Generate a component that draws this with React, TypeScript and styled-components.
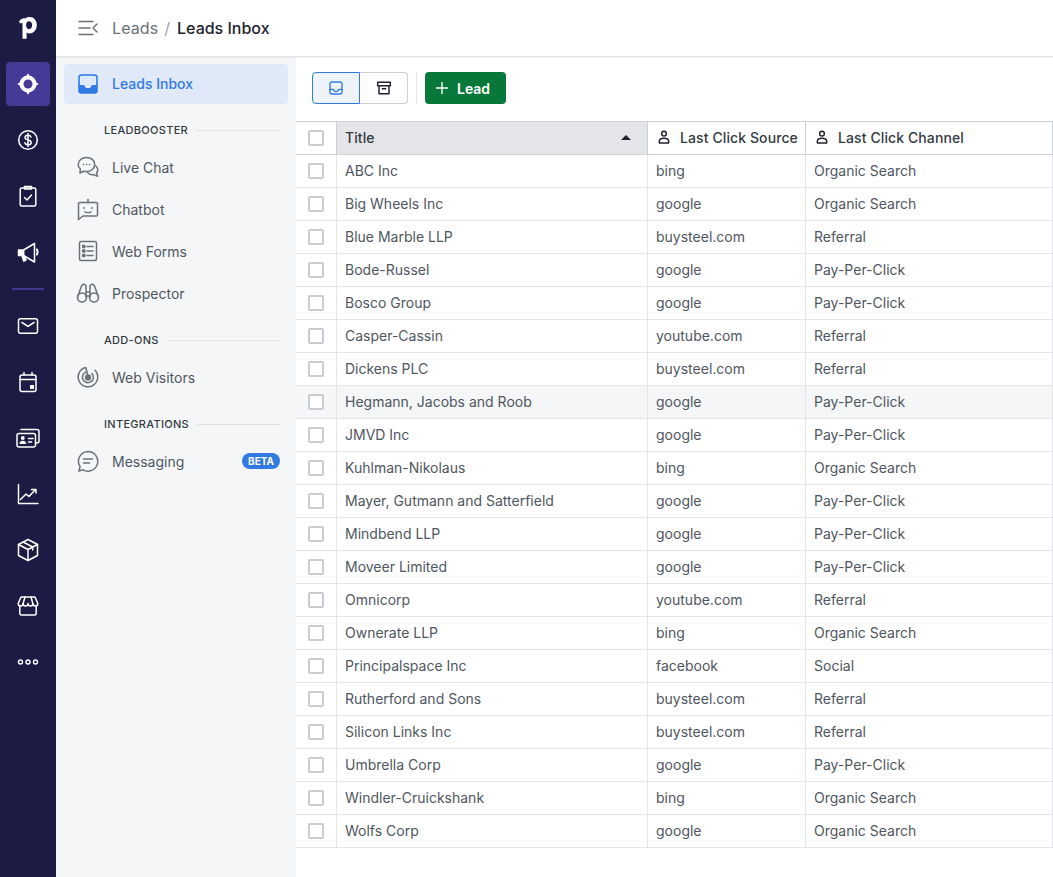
import React from "react";
import styled, { createGlobalStyle } from "styled-components";

const GlobalStyle = createGlobalStyle`
  html, body {
    margin: 0;
    padding: 0;
    background: #fff;
    font-family: Inter, "Liberation Sans", sans-serif;
    color: #21232c;
  }
  * { box-sizing: border-box; }
`;

const Shell = styled.div`
  display: flex;
  width: 1053px;
  height: 877px;
  overflow: hidden;
`;

const Rail = styled.nav`
  width: 56px;
  flex: none;
  background: #1b1b44;
  display: flex;
  flex-direction: column;
  align-items: center;
`;

const RailLogo = styled.div`
  height: 56px;
  display: flex;
  align-items: center;
  justify-content: center;
  color: #fff;
`;

const RailButton = styled.div<{ $active?: boolean }>`
  width: 44px;
  height: 44px;
  margin: 6px 0;
  border-radius: 4px;
  display: flex;
  align-items: center;
  justify-content: center;
  color: #fff;
  background: ${(p) => (p.$active ? "#453b97" : "transparent")};
`;

const RailDivider = styled.div`
  width: 32px;
  height: 2px;
  background: #3f3a8f;
  margin: 8px 0;
  flex: none;
`;

const Main = styled.div`
  flex: 1;
  min-width: 0;
  display: flex;
  flex-direction: column;
`;

const Header = styled.header`
  height: 57px;
  flex: none;
  display: flex;
  align-items: center;
  padding-left: 20px;
  background: #fff;
  border-bottom: 1px solid #e3e5e8;
  box-shadow: 0 1px 2px rgba(33, 35, 44, 0.06);
  position: relative;
  font-size: 16px;
  line-height: 24px;
`;

const MenuToggle = styled.span`
  display: flex;
  color: #6a7178;
  margin-right: 12px;
`;

const Crumb = styled.span`
  color: #6a7178;
  letter-spacing: 0.1px;
`;

const CrumbSep = styled.span`
  color: #9aa0a6;
  margin: 0 7px 0 6px;
`;

const CrumbCurrent = styled.span`
  font-weight: 500;
  color: #21232c;
`;

const Body = styled.div`
  flex: 1;
  display: flex;
  min-height: 0;
`;

const Side = styled.aside`
  width: 240px;
  flex: none;
  background: #f5f6f8;
  padding: 7px 8px 0;
  display: flex;
  flex-direction: column;
`;

const SideItem = styled.div<{ $active?: boolean }>`
  height: ${(p) => (p.$active ? "40px" : "42px")};
  display: flex;
  align-items: center;
  padding: 0 8px 0 12px;
  border-radius: 4px;
  font-size: 14px;
  color: ${(p) => (p.$active ? "#317ae2" : "#4f5660")};
  font-weight: ${(p) => (p.$active ? 500 : 400)};
  background: ${(p) => (p.$active ? "#dfe9f8" : "transparent")};
  svg {
    margin-right: 12px;
    flex: none;
    color: ${(p) => (p.$active ? "#317ae2" : "#6a7178")};
  }
`;

const ActiveLabel = styled.span`
  padding-bottom: 2px;
`;

const SectionTitle = styled.div`
  height: 16px;
  margin: 18px 0 8px;
  padding: 0 8px 0 40px;
  display: flex;
  align-items: center;
  gap: 8px;
  font-size: 11px;
  font-weight: 500;
  letter-spacing: 0.3px;
  color: #343a42;
  white-space: nowrap;
  &::after {
    content: "";
    flex: 1;
    height: 1px;
    background: #e0e2e6;
  }
`;

const Beta = styled.span`
  margin-left: auto;
  height: 16px;
  padding: 0 6px;
  border-radius: 8px;
  background: #317ae2;
  color: #fff;
  font-size: 10px;
  font-weight: 700;
  line-height: 16px;
`;

const Content = styled.main`
  flex: 1;
  min-width: 0;
  display: flex;
  flex-direction: column;
`;

const Toolbar = styled.div`
  height: 64px;
  flex: none;
  display: flex;
  align-items: flex-start;
  padding: 15px 0 0 16px;
`;

const Segment = styled.div`
  display: flex;
  height: 32px;
`;

const SegmentButton = styled.button<{ $selected?: boolean; $side: "left" | "right" }>`
  width: 48px;
  height: 32px;
  padding: 0;
  display: flex;
  align-items: center;
  justify-content: center;
  background: ${(p) => (p.$selected ? "#eef4fd" : "#fff")};
  color: ${(p) => (p.$selected ? "#317ae2" : "#21232c")};
  border: 1px solid ${(p) => (p.$selected ? "#317ae2" : "#cdd0d5")};
  border-left-width: ${(p) => (p.$side === "right" ? 0 : "1px")};
  border-radius: ${(p) => (p.$side === "left" ? "4px 0 0 4px" : "0 4px 4px 0")};
`;

const ToolDivider = styled.div`
  width: 1px;
  height: 32px;
  background: #e3e5e8;
  margin: 0 8px;
`;

const AddButton = styled.button`
  width: 81px;
  height: 32px;
  border: 0;
  border-radius: 4px;
  background: #08773a;
  color: #fff;
  font-family: inherit;
  font-size: 14px;
  font-weight: 600;
  display: flex;
  align-items: center;
  padding: 0 0 0 9px;
  gap: 7px;
`;

const Row = styled.div<{ $head?: boolean; $hover?: boolean }>`
  display: grid;
  grid-template-columns: 41px 311px 158px 247px;
  height: ${(p) => (p.$head ? "34px" : "33px")};
  border-top: ${(p) => (p.$head ? "1px solid #cdd0d5" : "0")};
  border-bottom: 1px solid ${(p) => (p.$head ? "#cdd0d5" : "#e3e5e8")};
  background: ${(p) => (p.$hover ? "#f5f6f8" : "#fff")};
`;

const Cell = styled.div<{ $head?: boolean; $sorted?: boolean }>`
  display: flex;
  align-items: center;
  min-width: 0;
  padding: 0 8px 2px;
  font-size: 14px;
  white-space: nowrap;
  letter-spacing: ${(p) => (p.$head ? "0.1px" : "0")};
  color: ${(p) => (p.$head ? "#343a42" : "#4f5660")};
  font-weight: ${(p) => (p.$head ? 500 : 400)};
  background: ${(p) => (p.$sorted ? "#e3e5e8" : "transparent")};
  border-right: 1px solid ${(p) => (p.$head ? "#cdd0d5" : "#e3e5e8")};
`;

const CheckCell = styled(Cell)`
  justify-content: center;
  padding: 0 1px 0 0;
`;

const Check = styled.span`
  width: 16px;
  height: 16px;
  border: 2px solid #c9ccd1;
  border-radius: 2px;
  background: #fff;
`;

const SortArrow = styled.span`
  margin-left: auto;
  margin-right: 8px;
  width: 0;
  height: 0;
  border-left: 5px solid transparent;
  border-right: 5px solid transparent;
  border-bottom: 5px solid #21232c;
`;

const PersonWrap = styled.span`
  display: flex;
  margin-right: 8px;
  color: #21232c;
`;

type IconProps = { size?: number; children: React.ReactNode };

const Icon = ({ size = 24, children }: IconProps) => (
  <svg
    width={size}
    height={size}
    viewBox="0 0 24 24"
    fill="none"
    stroke="currentColor"
    strokeWidth={1.5}
    strokeLinecap="round"
    strokeLinejoin="round"
  >
    {children}
  </svg>
);

const LogoMark = () => (
  <svg width="20" height="24" viewBox="0 0 20 24" fill="currentColor">
    <path
      fillRule="evenodd"
      d="M1 5.200C3.200 2.600 5.200 1.600 7.600 2.400c.5-.6 1.900-1.300 3.800-1.300 4.600 0 7.400 3.400 7.400 8 0 4.800-3 8.300-7.200 8.300-1.300 0-2.200-.3-3-.9v6.200H4.500V8.200c0-1.600-.9-1.500-2.300-.8L1 5.200ZM11 5.200c-1.800 0-2.900 1.500-2.900 3.900 0 2.500 1.100 4.100 2.900 4.100 1.900 0 3.100-1.600 3.100-4.100 0-2.400-1.200-3.900-3.100-3.900Z"
    />
  </svg>
);

const railTop = [
  <>
    <circle cx="12" cy="12" r="8.500" fill="currentColor" stroke="none" />
    <path d="M12 1.200 14 4.500h-4ZM12 22.800 10 19.500h4ZM1.200 12 4.500 10v4ZM22.800 12 19.500 14v-4Z" fill="currentColor" stroke="none" />
    <circle cx="12" cy="12" r="4.500" fill="#453b97" stroke="none" />
  </>,
  <>
    <circle cx="12" cy="12" r="9.300" />
    <path d="M15 9c-.4-1.200-1.500-1.800-3-1.800-1.700 0-3 .9-3 2.300 0 3.200 6.200 1.700 6.200 4.900 0 1.500-1.400 2.400-3.200 2.400-1.600 0-2.800-.7-3.200-2M12 5.500v13" />
  </>,
  <>
    <rect x="4.200" y="4" width="15.600" height="18" rx="1.500" />
    <path d="M8.500 2.500h7V5h-7ZM8.500 13.500l2.500 2.500 4.500-5" />
  </>,
  <>
    <path d="M2.500 10h5v5.500h-5Z" fill="currentColor" />
    <path d="M7.500 10 18.500 3.500v18.500L7.500 15.500Z" />
    <path d="m6 15.500 1.700 5.500 2.300-.8-1.500-4.200Z" fill="currentColor" />
    <path d="M21 9.500c.8 1.500.8 3.500 0 5" strokeWidth={2} />
  </>,
];

const railBottom = [
  <>
    <rect x="2.500" y="4.700" width="19" height="14.600" rx="2" />
    <path d="m6 8.500 6 3.800 6-3.800" />
  </>,
  <>
    <rect x="4" y="5" width="16" height="16.500" rx="2" />
    <path d="M4 9.500h16M8 2.500V5M16 2.500V5" />
    <rect x="14" y="15" width="4" height="4" fill="currentColor" stroke="none" />
  </>,
  <>
    <rect x="1" y="7.500" width="18.500" height="13.500" rx="2" />
    <path d="M5 3.500h16a2 2 0 0 1 2 2V15a2 2 0 0 1-2 2h-1.500" />
    <circle cx="6.800" cy="12" r="1.900" fill="currentColor" stroke="none" />
    <path d="M3.500 18c0-2.200 1.300-3.200 3.300-3.200s3.300 1 3.300 3.200Z" fill="currentColor" stroke="none" />
    <path d="M12.500 12.500h4.500M12.500 16h3" />
  </>,
  <>
    <path d="M2.500 2.500v19h19.500" />
    <path d="m4.500 17.500 5.500-5.500 3 2.500 6-6.500M15.500 7.500h4.500V11" />
  </>,
  <>
    <path d="M12 1.500 21.500 6.500v11L12 22.500 2.500 17.500v-11Z" />
    <path d="M2.500 6.500 12 11.500l9.500-5M12 11.500v11M7.200 4l9.500 5v3" />
  </>,
  <>
    <path d="M5 3h14l2.800 6.500a2.400 2.400 0 0 1-4.900 0 2.400 2.400 0 0 1-4.900 0 2.400 2.400 0 0 1-4.900 0 2.400 2.400 0 0 1-4.900 0Z" />
    <path d="M9 3 7.100 9.500M15 3l1.800 6.500M3.800 12.500v7a1.500 1.500 0 0 0 1.500 1.500h13.400a1.500 1.500 0 0 0 1.500-1.500v-7" />
  </>,
  <>
    <circle cx="4.500" cy="12" r="2" strokeWidth={1.400} />
    <circle cx="12" cy="12" r="2" strokeWidth={1.400} />
    <circle cx="19.500" cy="12" r="2" strokeWidth={1.400} />
  </>,
];

const InboxSolid = () => (
  <svg width="24" height="24" viewBox="0 0 24 24" fill="none">
    <rect x="3" y="3" width="18" height="18" rx="2.500" stroke="currentColor" strokeWidth="1.600" />
    <path d="M3 13h5l2 3h4l2-3h5v6a2 2 0 0 1-2 2H5a2 2 0 0 1-2-2Z" fill="currentColor" />
  </svg>
);

const sideIcons: Record<string, React.ReactNode> = {
  "Live Chat": (
    <>
      <path d="M10.500 2.500c-4.700 0-8.300 3-8.300 6.900 0 1.900.8 3.500 2.200 4.700L4 18l3.800-1.700c.8.200 1.700.3 2.700.3 4.700 0 8.200-3.100 8.200-7.200s-3.500-6.900-8.200-6.900Z" />
      <path d="M19.800 11c1.200.9 2 2.200 2 3.700 0 1.200-.4 2.100-1.200 3l.9 3.600-4.200-1.700c-2.300.4-4.400-.3-5.600-2" />
      <path d="M7.500 9.500h.1M10.500 9.500h.1M13.500 9.500h.1" />
    </>
  ),
  Chatbot: (
    <>
      <path d="M3.500 5.500h17a1 1 0 0 1 1 1v11.500a1 1 0 0 1-1 1H7l-4.500 3.500v-16a1 1 0 0 1 1-1Z" />
      <path d="M12 5.500V2.500M8 10.500v1M16 10.500v1M9 14.800c1.500 1 4.500 1 6 0" />
    </>
  ),
  "Web Forms": (
    <>
      <rect x="3.500" y="2.500" width="17" height="19" rx="1.500" />
      <path d="M11 7.500h6M11 12h6M11 16.500h6" />
      <rect x="6.800" y="6.500" width="2" height="2" fill="currentColor" />
      <rect x="6.800" y="11" width="2" height="2" fill="currentColor" />
      <rect x="6.800" y="15.500" width="2" height="2" fill="currentColor" />
    </>
  ),
  Prospector: (
    <>
      <circle cx="6" cy="16.500" r="4.500" />
      <circle cx="18" cy="16.500" r="4.500" />
      <path d="M1.500 16 5.500 5c.5-2 3.500-2.500 4.500-.5v11.500M22.500 16l-4-11c-.5-2-3.500-2.500-4.500-.5v11.500M10 11h4M10 15h4" />
    </>
  ),
  "Web Visitors": (
    <>
      <path d="M9.500 2.500a9.800 9.800 0 1 0 9.500 2.700" />
      <path d="M10 7a5.500 5.500 0 1 0 6 1.500" />
      <circle cx="12" cy="12.500" r="2.400" fill="currentColor" />
      <path d="M12 12 10 3" />
    </>
  ),
  Messaging: (
    <>
      <path d="M12 2.500a9.800 9.800 0 1 1-4.900 18.300L2.800 22l1.300-4.300A9.800 9.800 0 0 1 12 2.500Z" />
      <path d="M7.500 10h9M7.500 14h6" />
    </>
  ),
};

const NavItem = ({ label }: { label: string }) => (
  <SideItem>
    <Icon>{sideIcons[label]}</Icon>
    {label}
    {label === "Messaging" && <Beta>BETA</Beta>}
  </SideItem>
);

const Person = () => (
  <PersonWrap>
    <Icon size={16}>
      <circle cx="12" cy="7" r="3.500" strokeWidth={2.200} />
      <path d="M5 21v-2.500c0-3 2.500-4.500 7-4.500s7 1.500 7 4.500V21Z" strokeWidth={2.200} />
    </Icon>
  </PersonWrap>
);

const rows: [string, string, string][] = [
  ["ABC Inc", "bing", "Organic Search"],
  ["Big Wheels Inc", "google", "Organic Search"],
  ["Blue Marble LLP", "buysteel.com", "Referral"],
  ["Bode-Russel", "google", "Pay-Per-Click"],
  ["Bosco Group", "google", "Pay-Per-Click"],
  ["Casper-Cassin", "youtube.com", "Referral"],
  ["Dickens PLC", "buysteel.com", "Referral"],
  ["Hegmann, Jacobs and Roob", "google", "Pay-Per-Click"],
  ["JMVD Inc", "google", "Pay-Per-Click"],
  ["Kuhlman-Nikolaus", "bing", "Organic Search"],
  ["Mayer, Gutmann and Satterfield", "google", "Pay-Per-Click"],
  ["Mindbend LLP", "google", "Pay-Per-Click"],
  ["Moveer Limited", "google", "Pay-Per-Click"],
  ["Omnicorp", "youtube.com", "Referral"],
  ["Ownerate LLP", "bing", "Organic Search"],
  ["Principalspace Inc", "facebook", "Social"],
  ["Rutherford and Sons", "buysteel.com", "Referral"],
  ["Silicon Links Inc", "buysteel.com", "Referral"],
  ["Umbrella Corp", "google", "Pay-Per-Click"],
  ["Windler-Cruickshank", "bing", "Organic Search"],
  ["Wolfs Corp", "google", "Organic Search"],
];

const App = () => {
  return (
    <Shell>
      <GlobalStyle />
      <Rail>
        <RailLogo>
          <LogoMark />
        </RailLogo>
        {railTop.map((icon, i) => (
          <RailButton key={i} $active={i === 0}>
            <Icon>{icon}</Icon>
          </RailButton>
        ))}
        <RailDivider />
        {railBottom.map((icon, i) => (
          <RailButton key={i}>
            <Icon>{icon}</Icon>
          </RailButton>
        ))}
      </Rail>
      <Main>
        <Header>
          <MenuToggle>
            <Icon>
              <path d="M3 5.500h14M3 12h11M3 18.500h14M21 8l-4 4 4 4" />
            </Icon>
          </MenuToggle>
          <Crumb>Leads</Crumb>
          <CrumbSep>/</CrumbSep>
          <CrumbCurrent>Leads Inbox</CrumbCurrent>
        </Header>
        <Body>
          <Side>
            <SideItem $active>
              <InboxSolid />
              <ActiveLabel>Leads Inbox</ActiveLabel>
            </SideItem>
            <SectionTitle>LEADBOOSTER</SectionTitle>
            <NavItem label="Live Chat" />
            <NavItem label="Chatbot" />
            <NavItem label="Web Forms" />
            <NavItem label="Prospector" />
            <SectionTitle>ADD-ONS</SectionTitle>
            <NavItem label="Web Visitors" />
            <SectionTitle>INTEGRATIONS</SectionTitle>
            <NavItem label="Messaging" />
          </Side>
          <Content>
            <Toolbar>
              <Segment>
                <SegmentButton $selected $side="left">
                  <Icon size={16}>
                    <rect x="3" y="3" width="18" height="18" rx="3" strokeWidth={2} />
                    <path d="M3 14h5l2 3h4l2-3h5" strokeWidth={2} />
                  </Icon>
                </SegmentButton>
                <SegmentButton $side="right">
                  <Icon size={16}>
                    <path d="M2.500 3.500h19v5h-19ZM4.500 8.500v12h15v-12M9.500 13h5" strokeWidth={2.200} />
                  </Icon>
                </SegmentButton>
              </Segment>
              <ToolDivider />
              <AddButton>
                <Icon size={16}>
                  <path d="M12 3.500v17M3.500 12h17" strokeWidth={2} />
                </Icon>
                Lead
              </AddButton>
            </Toolbar>
            <Row $head>
              <CheckCell $head>
                <Check />
              </CheckCell>
              <Cell $head $sorted>
                Title
                <SortArrow />
              </Cell>
              <Cell $head>
                <Person />
                Last Click Source
              </Cell>
              <Cell $head>
                <Person />
                Last Click Channel
              </Cell>
            </Row>
            {rows.map(([title, source, channel], i) => (
              <Row key={title} $hover={i === 7}>
                <CheckCell>
                  <Check />
                </CheckCell>
                <Cell>{title}</Cell>
                <Cell>{source}</Cell>
                <Cell>{channel}</Cell>
              </Row>
            ))}
          </Content>
        </Body>
      </Main>
    </Shell>
  );
};

export default App;
